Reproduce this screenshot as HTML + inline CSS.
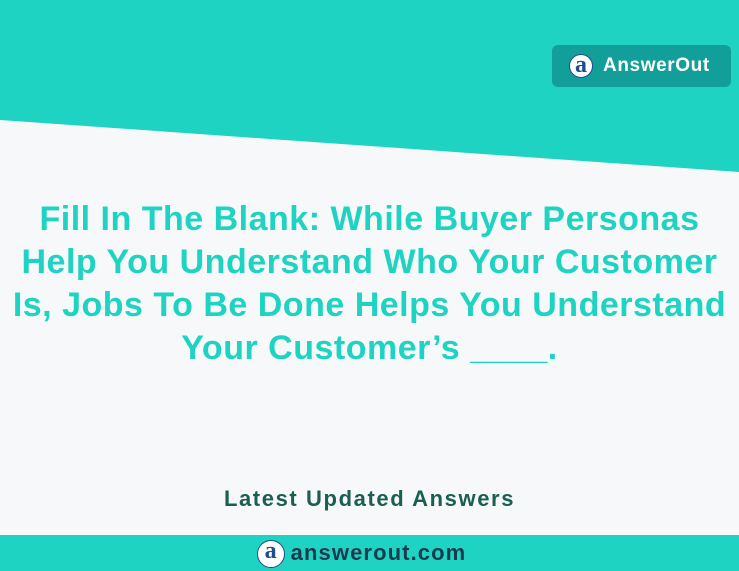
<!DOCTYPE html>
<html><head><style>
html,body{margin:0;padding:0}
body{width:739px;height:571px;position:relative;overflow:hidden;background:#f7f8f9;font-family:"Liberation Sans",sans-serif}
.top{position:absolute;left:0;top:0;width:739px;height:180px;background:#1fd3c3;clip-path:polygon(0 0,739px 0,739px 172px,0 120px)}
.badge{position:absolute;left:552px;top:45px;width:179px;height:42px;background:#129f9a;border-radius:6px;color:#fff;font-weight:bold;font-size:19px;line-height:42px;letter-spacing:0.6px}
.logo{display:inline-block;width:24px;height:24px;border-radius:50%;background:#fff;color:#1b4f8f;font-family:"Liberation Serif",serif;font-size:24px;line-height:21px;text-align:center;border:1.5px solid #1b4f8f;box-sizing:border-box;vertical-align:middle;letter-spacing:0}
.main{position:absolute;left:0;top:198px;width:739px;text-align:center;color:#1fd3c3;font-weight:bold;font-size:34px;line-height:43px;letter-spacing:0.5px}
.latest{position:absolute;left:0;top:486px;width:739px;text-align:center;color:#1b5f52;font-weight:bold;font-size:22px;letter-spacing:1.6px}
.bottom{position:absolute;left:0;top:535px;width:739px;height:36px;background:#1fd3c3;text-align:center;line-height:36px;color:#1a3a4f;font-weight:bold;font-size:22px;letter-spacing:1.1px}
</style></head><body>
<div class="top"></div>
<div class="badge"><span class="logo" style="margin-left:17px;margin-right:10px">a</span>AnswerOut</div>
<div class="main">Fill In The Blank: While Buyer Personas<br>Help You Understand Who Your Customer<br>Is, Jobs To Be Done Helps You Understand<br>Your Customer’s ____.</div>
<div class="latest">Latest Updated Answers</div>
<div class="bottom" style="padding-right:16px;box-sizing:border-box"><span class="logo" style="width:28px;height:28px;margin-right:6px">a</span>answerout.com</div>
</body></html>
